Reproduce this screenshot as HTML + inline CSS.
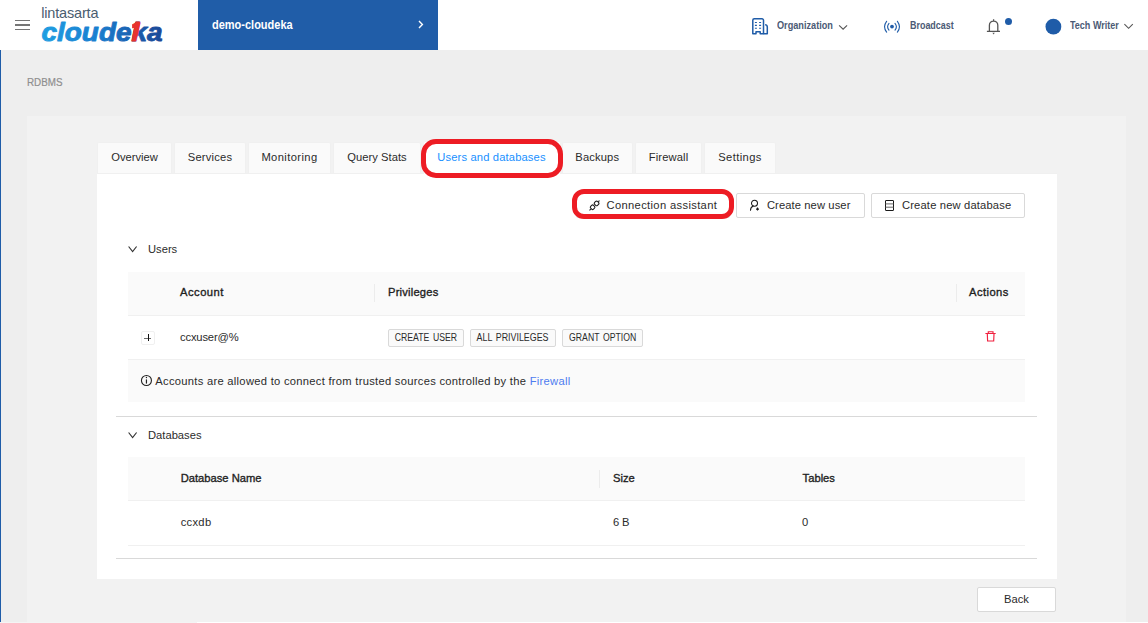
<!DOCTYPE html>
<html lang="en">
<head>
<meta charset="utf-8">
<title>RDBMS - Users and databases</title>
<style>
*{box-sizing:border-box;margin:0;padding:0}
html,body{width:1148px;height:623px;overflow:hidden;background:#eeeeee}
body{position:relative;font-family:"Liberation Sans",sans-serif;font-size:11.2px;color:#262626}
.abs{position:absolute}
main{word-spacing:0}
/* header */
header{position:absolute;left:0;top:0;width:1148px;height:50px;background:#fff}
.burger{position:absolute;left:15px;top:20px;width:15px;height:10px}
.burger i{position:absolute;left:0;width:15px;height:1.4px;background:#757575}
.logo1{position:absolute;left:41.2px;top:5.2px;font-size:14.5px;line-height:16px;letter-spacing:-.17px;color:#4a5d70;white-space:nowrap}
.logo2{position:absolute;left:38px;top:14px;width:130px;height:34px}
.project{position:absolute;left:198px;top:0;width:240px;height:50px;background:#205da8;color:#fff}
.cond{position:absolute;white-space:nowrap;font-weight:bold;font-size:11.2px;line-height:14px;transform-origin:0 50%;color:#4b5a75}
nav.top .ic{position:absolute}
/* page */
.strip{position:absolute;left:0;top:50px;width:1px;height:573px;background:#1f5ca8}
.crumb{position:absolute;left:27.4px;top:75px;font-size:10.8px;line-height:14px;color:#8f8f8f;-webkit-text-stroke:.2px #8f8f8f;transform-origin:0 50%;white-space:nowrap}
.panel{position:absolute;left:27px;top:116px;width:1099px;height:507px;background:#f2f2f2}
.card{position:absolute;left:97px;top:173px;width:960px;height:406px;background:#fff;border-top:1px solid #f0f0f0}
/* tabs */
.tabs{position:absolute;left:0;top:0}
.tab{position:absolute;top:142px;height:31px;background:#fafafa;border:1px solid #f0f0f0;border-bottom:0;border-radius:2px 2px 0 0;font-size:11.2px;line-height:28px;text-align:center;white-space:nowrap;color:#2b2b2b}
.tab.on{background:#fff;border-color:#fff;color:#1890ff;height:32px}
.mark{position:absolute;border:5px solid #ed1c24;background:transparent}
/* buttons */
.btn{position:absolute;height:25px;background:#fff;border:1px solid #d9d9d9;border-radius:2px;font-size:11.2px;line-height:23px;white-space:nowrap;color:#2b2b2b}
.btn span{position:absolute;top:0}
.btn svg{position:absolute}
/* sections */
.sec{position:absolute;font-size:11.2px;line-height:14px;white-space:nowrap;color:#2b2b2b}
.hr{position:absolute;left:116px;width:921px;height:1px;background:#d9d9d9}
.thead{position:absolute;left:128px;width:897px;height:44px;background:#fafafa;border-bottom:1px solid #f0f0f0}
.th{position:absolute;-webkit-text-stroke:.35px #1f1f1f;font-size:11.2px;line-height:14px;white-space:nowrap;color:#1f1f1f}
.vd{position:absolute;width:1px;height:18px;background:#ececec}
.row{position:absolute;left:128px;width:897px;border-bottom:1px solid #f0f0f0}
.td{position:absolute;font-size:11.2px;line-height:14px;white-space:nowrap;color:#2b2b2b}
.tag{position:absolute;top:329px;height:18px;background:#fafafa;border:1px solid #d9d9d9;border-radius:2px;font-size:10px;line-height:16px;word-spacing:1.4px;text-align:center;white-space:nowrap;color:#2b2b2b}
.tag span{display:inline-block;transform-origin:50% 50%}
.info{position:absolute;left:128px;top:360px;width:897px;height:42.4px;background:#fafafa}
a{color:#4d7cf0;text-decoration:none}
.exp{position:absolute;left:141px;top:331px;width:14px;height:14px;border:1px solid #f0f0f0;border-radius:2px;background:#fff}
.exp:before{content:"";position:absolute;left:2px;top:6px;width:7px;height:1px;background:#6a6a6a}
.exp:after{content:"";position:absolute;left:6px;top:2px;width:1px;height:7px;background:#111}
.foot1{position:absolute;left:0;top:622px;width:197px;height:1px;background:#f4f4f4}
.foot2{position:absolute;left:197px;top:622px;width:951px;height:1px;background:#fff}
</style>
</head>
<body>
<header>
  <div class="burger"><i style="top:0"></i><i style="top:4.3px"></i><i style="top:8.6px"></i></div>
  <div class="logo1">lintasarta</div>
  <svg class="logo2" viewBox="0 0 130 34">
    <defs>
      <linearGradient id="lg" x1="0" y1="0" x2="1" y2="0" gradientUnits="objectBoundingBox">
        <stop offset="0" stop-color="#1f9fe2"/><stop offset="0.45" stop-color="#1a7fd0"/><stop offset="1" stop-color="#1b4796"/>
      </linearGradient>
    </defs>
    <text x="3.5" y="26.9" font-family="Liberation Sans, sans-serif" font-weight="bold" font-style="italic" font-size="25" fill="url(#lg)" stroke="url(#lg)" stroke-width="0.9" stroke-linejoin="round" textLength="121" lengthAdjust="spacingAndGlyphs">cloudeka</text>
  <clipPath id="flagclip"><rect x="94.1" y="0" width="30" height="22.5"/></clipPath>
    <g font-family="Liberation Sans, sans-serif" font-weight="bold" font-style="italic" fill="#e8332e" stroke="#e8332e" stroke-width="0.9" stroke-linejoin="round">
      <text transform="translate(93.4 26.9) scale(1.116 1)" font-size="25">l</text>
      <g clip-path="url(#flagclip)"><text transform="translate(88.5 26.9) scale(1.116 1)" font-size="26.3">1</text></g>
    </g>
  </svg>
  <div class="project">
    <span class="cond" style="left:14px;top:17.8px;color:#fff;font-size:13.5px;transform:scaleX(.814)">demo-cloudeka</span>
    <svg class="abs" style="left:219px;top:19px" width="8" height="11" viewBox="0 0 8 11"><path d="M2 2.1 L5.4 5.5 L2 8.9" fill="none" stroke="#fff" stroke-width="1.4"/></svg>
  </div>
  <nav class="top">
    <svg class="abs" style="left:751px;top:17px" width="18" height="18" viewBox="0 0 18 18" fill="none" stroke="#1f5ca8" stroke-width="1.5" stroke-linejoin="round">
      <path d="M1.8 16.8V3.3a1.5 1.5 0 0 1 1.5-1.5h7.7a1.5 1.5 0 0 1 1.5 1.5V16.8H9.2V14.7H5V16.8Z"/>
      <path d="M12.5 16.8H16.3V9.9a2.2 2.2 0 0 0-2.2-2.2"/>
      <path d="M3.9 5.5h2M8.1 5.5h2M3.9 8.4h2M8.1 8.4h2M3.9 11.3h2M8.1 11.3h2" stroke-width="1.1"/>
    </svg>
    <svg class="abs" style="left:838px;top:24px" width="11" height="7" viewBox="0 0 11 7" fill="none" stroke="#555" stroke-width="1.1"><path d="M1.1 1.4L5.1 5.2L9.1 1.4"/></svg>
    <svg class="abs" style="left:883px;top:20px" width="18" height="14" viewBox="0 0 18 14" fill="none" stroke="#1f5ca8" stroke-width="1.1" stroke-linecap="round">
      <path d="M3.6 1.3Q-0.5 6.7 3.6 12.1M14.4 1.3Q18.5 6.7 14.4 12.1M6 3.3Q3.2 6.7 6 10.1M12 3.3Q14.8 6.7 12 10.1"/>
      <circle cx="9" cy="6.6" r="1.9" fill="#1f5ca8" stroke="none"/>
    </svg>
    <svg class="abs" style="left:986px;top:18px" width="16" height="18" viewBox="0 0 16 18" fill="none" stroke="#555" stroke-width="1.3">
      <path d="M3.4 13.4V7.3a4.2 4.2 0 0 1 8.4 0V13.4M0.9 13.4H14M7.6 3.1V1.2"/>
      <path d="M6.4 14.8H8.8L7.6 16.4Z" fill="#5a5a5a" stroke="none"/>
    </svg>
    <svg class="abs" style="left:1004px;top:17px" width="9" height="9" viewBox="0 0 9 9"><circle cx="4.5" cy="4.5" r="3.5" fill="#1f5ca8"/></svg>
    <svg class="abs" style="left:1045px;top:18px" width="17" height="17" viewBox="0 0 17 17"><circle cx="8.4" cy="8.7" r="7.9" fill="#1f5ca8"/></svg>
    <svg class="abs" style="left:1123px;top:22px" width="12" height="8" viewBox="0 0 12 8" fill="none" stroke="#555" stroke-width="1.1"><path d="M1.4 2.1L5.6 6.3L9.8 2.1"/></svg>

    <span class="cond" style="left:777.4px;top:18.2px;transform:scaleX(.8175)">Organization</span>
    <span class="cond" style="left:910.2px;top:18.2px;transform:scaleX(.799)">Broadcast</span>
    <span class="cond" style="left:1070px;top:18.2px;transform:scaleX(.806)">Tech Writer</span>
  </nav>
</header>
<div class="strip"></div>
<div class="crumb" style="transform:scaleX(.91)">RDBMS</div>
<div class="panel"></div>
<main>
  <div class="card"></div>
  <div class="tabs">
    <div class="tab" style="left:97px;width:75px">Overview</div>
    <div class="tab" style="letter-spacing:0.2px;left:174px;width:72px">Services</div>
    <div class="tab" style="letter-spacing:0.4px;left:248px;width:83px">Monitoring</div>
    <div class="tab" style="letter-spacing:0.03px;left:333px;width:88px">Query Stats</div>
    <div class="tab on" style="letter-spacing:0.14px;left:423.5px;width:136px">Users and databases</div>
    <div class="tab" style="letter-spacing:0.15px;left:561.5px;width:71.5px">Backups</div>
    <div class="tab" style="letter-spacing:0.12px;left:635px;width:67px">Firewall</div>
    <div class="tab" style="letter-spacing:0.4px;left:704px;width:72px">Settings</div>
  </div>
  <div class="mark" style="left:421px;top:139px;width:142px;height:39px;border-radius:15px"></div>

  <div class="btn" style="left:576px;top:193px;width:154px"><svg style="left:12px;top:6px" width="12" height="12" viewBox="0 0 12 12" fill="none" stroke="#1a1a1a" stroke-width="1.05"><path d="M0.5 10.4L1.8 9.1M9.4 1.9L10.4 0.5"/><rect x="-2" y="-2" width="4" height="4" rx="1.3" transform="translate(3.6 7.3) rotate(45)"/><rect x="-2" y="-2" width="4" height="4" rx="1.3" transform="translate(7.6 3.4) rotate(45)"/></svg><span style="left:29.5px;letter-spacing:0.34px">Connection assistant</span></div>
  <div class="btn" style="left:736px;top:193px;width:129px"><svg style="left:12px;top:5px" width="12" height="13" viewBox="0 0 12 13" fill="none" stroke="#1a1a1a" stroke-width="1.05"><circle cx="5.5" cy="4.2" r="3"/><path d="M1.5 11.2Q1.5 8.2 4.3 7" stroke-linecap="round"/><path d="M7 10.1H10M8.5 8.6V11.6" stroke-width="1.1"/></svg><span style="left:29.9px;letter-spacing:0.1px">Create new user</span></div>
  <div class="btn" style="left:871px;top:193px;width:154px"><svg style="left:12px;top:5px" width="11" height="12" viewBox="0 0 11 12" fill="none" stroke="#1a1a1a" stroke-width="1"><rect x="1.5" y="1.5" width="8" height="10" rx=".3"/><path d="M1.5 4.9H9.5M1.5 8.2H9.5" stroke="#666"/></svg><span style="left:30px;letter-spacing:0.155px">Create new database</span></div>
  <div class="mark" style="left:572px;top:189px;width:162px;height:30px;border-radius:12px"></div>

  <svg class="abs" style="left:127px;top:245px" width="11" height="8" viewBox="0 0 11 8" fill="none" stroke="#333" stroke-width="1.15"><path d="M1.6 1.5L5.6 6.6L9.6 1.5"/></svg>
  <div class="sec" style="left:148px;top:242px">Users</div>
  <div class="thead" style="top:272px"></div>
  <div class="th" style="letter-spacing:0.5px;left:180px;top:285px">Account</div>
  <div class="vd" style="left:374px;top:284px"></div>
  <div class="th" style="letter-spacing:0.2px;left:388px;top:285px">Privileges</div>
  <div class="vd" style="left:956px;top:284px"></div>
  <div class="th" style="letter-spacing:0.45px;left:969px;top:285px">Actions</div>
  <div class="row" style="top:316px;height:44px"></div>
  <div class="exp"></div>
  <div class="td" style="letter-spacing:-0.15px;left:180px;top:330px">ccxuser@%</div>
  <div class="tag" style="left:388px;width:76px"><span style="transform:scaleX(.868)">CREATE USER</span></div>
  <div class="tag" style="left:470px;width:86px"><span style="transform:scaleX(.888)">ALL PRIVILEGES</span></div>
  <div class="tag" style="left:562px;width:81px"><span style="transform:scaleX(.868)">GRANT OPTION</span></div>
  <svg class="abs" style="left:984px;top:330px" width="13" height="13" viewBox="0 0 13 13" fill="none" stroke="#f0203f" stroke-width="1.15"><path d="M1.4 3.5H11.7M4.3 3.3V1.7H9V3.3M3.3 3.6L3.6 11H9.7L10 3.6"/></svg>
  <div class="info"></div>
  <svg class="abs" style="left:140px;top:374px" width="13" height="13" viewBox="0 0 13 13" fill="none" stroke="#222" stroke-width="1.1"><circle cx="6.45" cy="6.5" r="5"/><path d="M6.45 5.4V9.6" stroke-width="1.2"/><circle cx="6.45" cy="3.5" r=".7" fill="#222" stroke="none"/></svg>
  <div class="td" style="letter-spacing:0.28px;left:155.3px;top:374px">Accounts are allowed to connect from trusted sources controlled by the <a>Firewall</a></div>
  <div class="hr" style="top:416px"></div>

  <svg class="abs" style="left:127px;top:431px" width="11" height="8" viewBox="0 0 11 8" fill="none" stroke="#333" stroke-width="1.15"><path d="M1.6 1.5L5.6 6.6L9.6 1.5"/></svg>
  <div class="sec" style="left:148px;top:428px">Databases</div>
  <div class="thead" style="top:457px"></div>
  <div class="th" style="letter-spacing:0px;left:180.7px;top:471px">Database Name</div>
  <div class="vd" style="left:599px;top:470px"></div>
  <div class="th" style="letter-spacing:0px;left:613px;top:471px">Size</div>
  <div class="th" style="letter-spacing:0px;left:802.6px;top:471px">Tables</div>
  <div class="row" style="top:501px;height:45px"></div>
  <div class="td" style="letter-spacing:0.3px;left:180.7px;top:515px">ccxdb</div>
  <div class="td" style="letter-spacing:-0.15px;left:613px;top:515px">6 B</div>
  <div class="td" style="left:802px;top:515px">0</div>
  <div class="hr" style="top:558px"></div>

  <div class="btn" style="left:977px;top:587px;width:79px;text-align:center">Back</div>
</main>
<div class="foot1"></div><div class="foot2"></div>
</body>
</html>
